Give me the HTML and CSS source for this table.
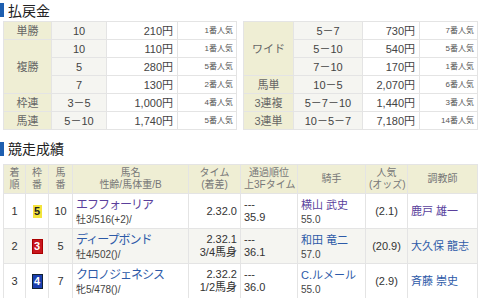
FILE: index.html
```html
<!DOCTYPE html>
<html lang="ja">
<head>
<meta charset="utf-8">
<link rel="stylesheet" href="styles.css">
</head>
<body>
<h2 class="sec">払戻金</h2>
<div class="pays">
  <table class="pay">
    <colgroup><col class="c1"><col class="c2"><col class="c3"><col class="c4"></colgroup>
    <tr><th>単勝</th><td class="num">10</td><td class="yen">210円</td><td class="pop">1番人気</td></tr>
    <tr><th rowspan="3">複勝</th><td class="num">10</td><td class="yen">110円</td><td class="pop">1番人気</td></tr>
    <tr><td class="num">5</td><td class="yen">280円</td><td class="pop">5番人気</td></tr>
    <tr><td class="num">7</td><td class="yen">130円</td><td class="pop">2番人気</td></tr>
    <tr><th>枠連</th><td class="num">3－5</td><td class="yen">1,000円</td><td class="pop">4番人気</td></tr>
    <tr><th>馬連</th><td class="num">5－10</td><td class="yen">1,740円</td><td class="pop">5番人気</td></tr>
  </table>
  <table class="pay">
    <colgroup><col class="r1"><col class="r2"><col class="r3"><col class="r4"></colgroup>
    <tr><th rowspan="3">ワイド</th><td class="num">5－7</td><td class="yen">730円</td><td class="pop">7番人気</td></tr>
    <tr><td class="num">5－10</td><td class="yen">540円</td><td class="pop">5番人気</td></tr>
    <tr><td class="num">7－10</td><td class="yen">170円</td><td class="pop">1番人気</td></tr>
    <tr><th>馬単</th><td class="num">10－5</td><td class="yen">2,070円</td><td class="pop">6番人気</td></tr>
    <tr><th>3連複</th><td class="num">5－7－10</td><td class="yen">1,440円</td><td class="pop">3番人気</td></tr>
    <tr><th>3連単</th><td class="num">10－5－7</td><td class="yen">7,180円</td><td class="pop">14番人気</td></tr>
  </table>
</div>
<h2 class="sec sec2">競走成績</h2>
<table class="res">
  <colgroup>
    <col class="w1"><col class="w2"><col class="w3"><col class="w4"><col class="w5"><col class="w6"><col class="w7"><col class="w8"><col class="w9">
  </colgroup>
  <tr class="hd">
    <th>着<br>順</th><th>枠<br>番</th><th>馬<br>番</th><th>馬名<br>性齢/馬体重/B</th><th>タイム<br>(着差)</th><th>通過順位<br>上3Fタイム</th><th>騎手</th><th>人気<br>(オッズ)</th><th>調教師</th>
  </tr>
  <tr>
    <td class="ctr">1</td><td class="ctr"><span class="waku w5y">5</span></td><td class="ctr">10</td>
    <td class="name"><a class="lk v">エフフォーリア</a><span class="sub">牡3/516(+2)/</span></td>
    <td class="time">2.32.0</td>
    <td class="pass"><span>---</span><span>35.9</span></td>
    <td class="jk"><a class="lk v">横山 武史</a><span class="sub">55.0</span></td>
    <td class="ctr odds">(2.1)</td>
    <td class="tr"><a class="lk v">鹿戸 雄一</a></td>
  </tr>
  <tr class="alt">
    <td class="ctr">2</td><td class="ctr"><span class="waku w3r">3</span></td><td class="ctr">5</td>
    <td class="name"><a class="lk">ディープボンド</a><span class="sub">牡4/502()/</span></td>
    <td class="time">2.32.1<br>3/4馬身</td>
    <td class="pass"><span>---</span><span>36.1</span></td>
    <td class="jk"><a class="lk">和田 竜二</a><span class="sub">57.0</span></td>
    <td class="ctr odds">(20.9)</td>
    <td class="tr"><a class="lk">大久保 龍志</a></td>
  </tr>
  <tr>
    <td class="ctr">3</td><td class="ctr"><span class="waku w4b">4</span></td><td class="ctr">7</td>
    <td class="name"><a class="lk">クロノジェネシス</a><span class="sub">牝5/478()/</span></td>
    <td class="time">2.32.2<br>1/2馬身</td>
    <td class="pass"><span>---</span><span>36.0</span></td>
    <td class="jk"><a class="lk">C.ルメール</a><span class="sub">55.0</span></td>
    <td class="ctr odds">(2.9)</td>
    <td class="tr"><a class="lk">斉藤 崇史</a></td>
  </tr>
</table>
</body>
</html>
```
FILE: styles.css
```css
html, body {
  margin: 0;
  padding: 0;
  background: #fff;
  font-family: "Liberation Sans", "Noto Sans CJK JP", sans-serif;
  color: #333;
}
.sec {
  margin: 0;
  height: 21px;
  display: flex;
  align-items: center;
  font-size: 14px;
  font-weight: normal;
  color: #222;
  padding-left: 8px;
  padding-bottom: 2px;
  box-sizing: border-box;
  position: relative;
}
.sec::before {
  content: "";
  position: absolute;
  left: 0;
  top: 3px;
  width: 4px;
  height: 14px;
  background: #1e5fb0;
}
.sec2 {
  margin-top: 6px;
  height: 28px;
  padding-bottom: 4px;
}
.sec2::before {
  top: 6px;
}
.pays {
  display: grid;
  grid-template-columns: 233px 234px;
  column-gap: 7px;
  padding: 0 3px;
}
table {
  border-collapse: collapse;
  table-layout: fixed;
}
.pay {
  width: 100%;
}
.pay col.c1 { width: 48px; }
.pay col.c2 { width: 55px; }
.pay col.c3 { width: 71px; }
.pay col.c4 { width: 59px; }
.pay col.r1 { width: 50px; }
.pay col.r2 { width: 69px; }
.pay col.r3 { width: 57px; }
.pay col.r4 { width: 58px; }
.pay th, .pay td {
  border: 1px solid #e4e4e4;
  height: 17px;
  padding: 0 4px;
  font-size: 11px;
  line-height: 12px;
  white-space: nowrap;
}
.pay th {
  background: #efeed4;
  font-weight: normal;
  color: #666;
  text-align: center;
}
.pay td.num {
  background: #f5f5f1;
  text-align: center;
  color: #444;
}
.pay td.yen {
  text-align: right;
  color: #444;
}
.pay td.pop {
  text-align: right;
  font-size: 8px;
  color: #555;
  padding-right: 3px;
}
.res {
  margin: 0 3px;
  width: 474px;
}
.res col.w1 { width: 22px; }
.res col.w2 { width: 23px; }
.res col.w3 { width: 24px; }
.res col.w4 { width: 116px; }
.res col.w5 { width: 52px; }
.res col.w6 { width: 57px; }
.res col.w7 { width: 68px; }
.res col.w8 { width: 42px; }
.res col.w9 { width: 70px; }
.res th, .res td {
  border: 1px solid #e4e4e4;
  padding: 0 3px;
  white-space: nowrap;
  overflow: hidden;
}
.res tr.hd th {
  background: #efeed4;
  font-weight: normal;
  color: #777;
  font-size: 10px;
  line-height: 12px;
  height: 28px;
  text-align: center;
}
.res td {
  height: 34px;
  font-size: 11px;
  color: #333;
}
.res tr.alt td {
  background: #f5f5f1;
}
.ctr { text-align: center; }
.waku {
  display: inline-block;
  width: 9px;
  height: 13px;
  line-height: 13px;
  font-size: 11px;
  font-weight: bold;
  text-align: center;
  vertical-align: middle;
}
.w5y { background: #f4e43c; color: #222; }
.w3r { background: #c8161d; color: #fff; outline: 1px solid #a00; }
.w4b { background: #1b3fb0; color: #fff; outline: 1px solid #123; }
.name, .jk {
  line-height: 14px;
}
.lk {
  display: block;
  color: #2d5aa8;
  font-size: 12px;
  letter-spacing: -1px;
  line-height: 16px;
}
.jk .lk, .tr .lk {
  font-size: 11px;
  letter-spacing: 0;
}
.lk.v { color: #5a3f9c; }
.sub {
  display: block;
  font-size: 10px;
  line-height: 13px;
  color: #444;
}
.time {
  text-align: right;
  line-height: 13px;
}
.pass {
  font-size: 10px;
  line-height: 13px;
}
.pass span { display: block; }
.odds { font-size: 10px; }
```
